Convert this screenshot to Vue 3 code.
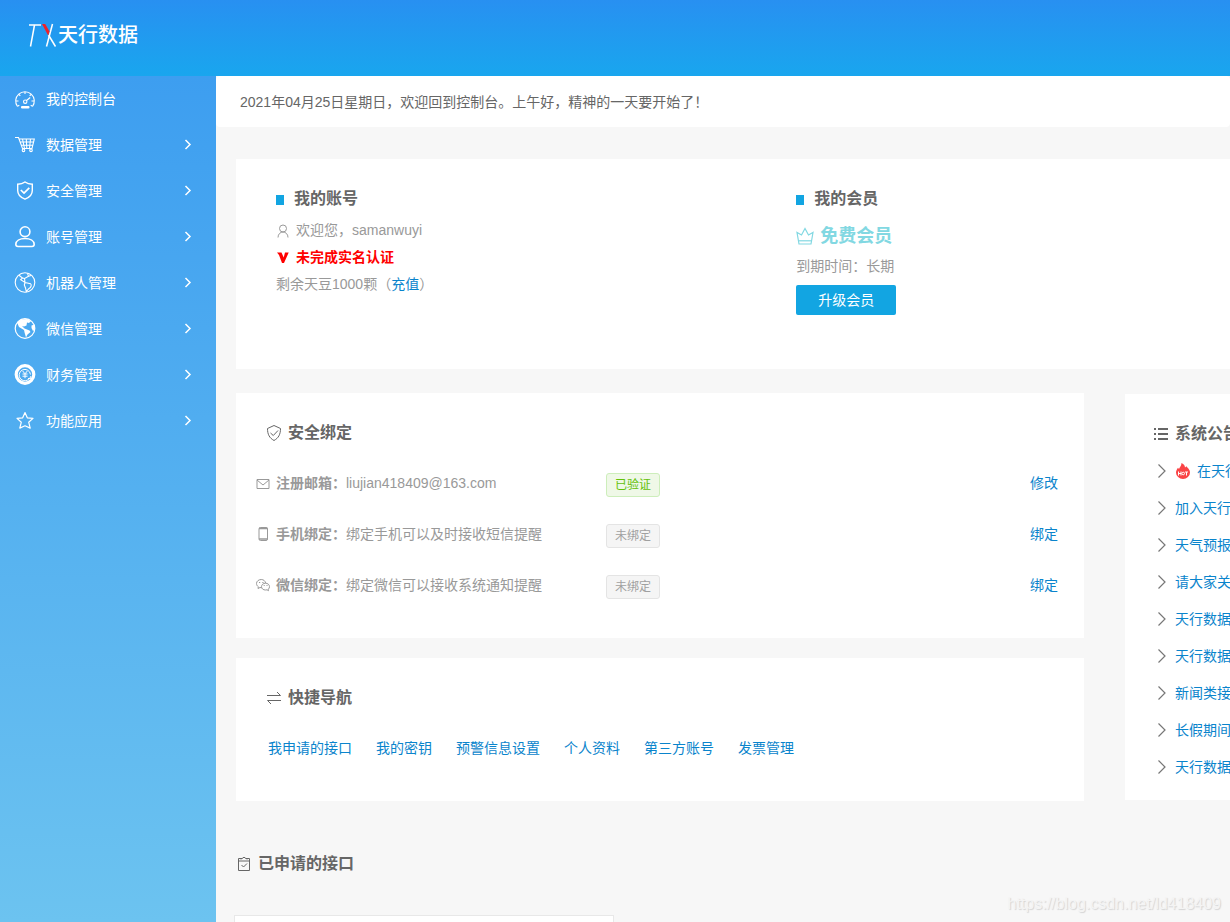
<script setup>
const menu = [
  { label: '我的控制台', icon: 'gauge' },
  { label: '数据管理', icon: 'cart', more: true },
  { label: '安全管理', icon: 'shield', more: true },
  { label: '账号管理', icon: 'user', more: true },
  { label: '机器人管理', icon: 'globe', more: true },
  { label: '微信管理', icon: 'earth', more: true },
  { label: '财务管理', icon: 'coin', more: true },
  { label: '功能应用', icon: 'star', more: true },
]

const bindings = [
  { icon: 'mail', label: '注册邮箱：', text: 'liujian418409@163.com', tag: '已验证', ok: true, action: '修改' },
  { icon: 'phone', label: '手机绑定：', text: '绑定手机可以及时接收短信提醒', tag: '未绑定', ok: false, action: '绑定' },
  { icon: 'wechat', label: '微信绑定：', text: '绑定微信可以接收系统通知提醒', tag: '未绑定', ok: false, action: '绑定' },
]

const shortcuts = ['我申请的接口', '我的密钥', '预警信息设置', '个人资料', '第三方账号', '发票管理']

const notices = [
  { text: '在天行', hot: true },
  { text: '加入天行' },
  { text: '天气预报' },
  { text: '请大家关' },
  { text: '天行数据' },
  { text: '天行数据' },
  { text: '新闻类接' },
  { text: '长假期间' },
  { text: '天行数据' },
]
</script>

<template>
  <div class="page">
    <header class="topbar">
      <a class="brand" href="#">
        <svg class="brand-mark" viewBox="0 0 30 26" aria-hidden="true">
          <g fill="none" stroke="#fff" stroke-width="1.5">
            <path d="M1 3H13" />
            <path d="M6.500 3L2.500 24.500" />
            <path d="M24.500 2L18.500 24.500" />
            <path d="M20.500 13L27.500 24.500" />
          </g>
          <path d="M14 2H17.200L21.500 9.500L20.200 13.500Z" fill="#ee2028" />
        </svg>
        <span>天行数据</span>
      </a>
    </header>

    <div class="body">
      <nav class="sidebar">
        <a v-for="item in menu" :key="item.label" class="menu-item" href="#">
          <svg class="menu-icon" viewBox="0 0 22 22" aria-hidden="true">
            <g v-if="item.icon === 'gauge'" fill="none" stroke="currentColor" stroke-width="1.1">
              <path d="M3.500 18.500A9.300 9.300 0 1 1 18.500 18.500" />
              <path d="M11 4V6M5 6.500L6.300 7.800M17 6.500L15.700 7.800M2 13H4.500M17.500 13H20M3.500 18.300L5.300 17.200M18.500 18.300L16.700 17.200M12.500 12.500L16.200 9.500" />
              <circle cx="11.200" cy="13.700" r="1.700" />
              <rect x="7.500" y="18.500" width="7.500" height="1.500" rx="0.700" fill="currentColor" />
            </g>
            <g v-else-if="item.icon === 'cart'" fill="none" stroke="currentColor" stroke-width="1.100">
              <path d="M1 3.500H4.500L8.500 14.500H18L20.300 5H5.200M6.300 8H19.500M7.400 11.200H18.800M8.500 5L10.500 14.500M12.300 5L12.800 14.500M16.500 5L15.500 14.500" />
              <circle cx="9.500" cy="16.300" r="1.300" />
              <circle cx="17" cy="16.300" r="1.300" />
            </g>
            <g v-else-if="item.icon === 'shield'" fill="none" stroke="currentColor" stroke-width="1.400">
              <path d="M11 2C8.800 3.700 6.300 4.300 3.700 4.300V10.500C3.700 14.700 6.500 17.500 11 19.200C15.500 17.500 18.300 14.700 18.300 10.500V4.300C15.700 4.300 13.200 3.700 11 2Z" />
              <path d="M6.800 10L10 13.100L15.300 7.800" stroke-width="1.700" />
            </g>
            <g v-else-if="item.icon === 'user'" fill="none" stroke="currentColor" stroke-width="1.600">
              <circle cx="11" cy="5.700" r="4.900" />
              <path d="M4 20.500H18C19.300 20.500 20.200 19.600 20.200 18.300C20 15 16.500 12.500 11 12.500S2 15 1.800 18.300C1.800 19.600 2.700 20.500 4 20.500Z" />
            </g>
            <g v-else-if="item.icon === 'globe'" fill="none" stroke="currentColor" stroke-width="1.100">
              <circle cx="11" cy="10.500" r="9.800" />
              <path d="M5 3.300L8.500 6L6.700 7.700L11 10.500L10.500 6.500L14.500 4.300L13.500 1.300M11 10.500L16.500 11.700C18 13 17 15.500 15 16.500L12.300 19.500L11.500 16L10.300 13Z" />
              <path d="M14.500 4.300L17 3.500M8.500 6L10.500 6.500" />
            </g>
            <g v-else-if="item.icon === 'earth'">
              <circle cx="11" cy="10.500" r="9.800" fill="none" stroke="currentColor" stroke-width="1.200" />
              <path d="M3 4.500L7 1.500L13 1L17 3L15 5L13 4.500L12.500 7.500L10 8.500L8 8L10.500 10.500L15.500 12.500L16.500 14L13.500 16.500L12 19.500L10.700 15L10 12L5 9Z" fill="currentColor" />
              <path d="M17.500 7.500L20.500 6.500L20.800 11.500L19 13L17.500 10Z" fill="currentColor" />
            </g>
            <g v-else-if="item.icon === 'coin'" fill="none" stroke="currentColor">
              <circle cx="11" cy="10.500" r="8.800" stroke-width="3.200" />
              <path d="M16 13.500A5.700 5.700 0 1 1 16.500 10.500M14 14.500H16.800V12" stroke-width="1" />
              <path d="M8.500 6.800L11 9.800L13.500 6.800M11 9.800V14.200M8.500 10H13.500M8.500 12.200H13.500" stroke-width="1" />
            </g>
            <path v-else d="M11 2.500L13.300 7.800L19 8.400L14.700 12.200L16.200 18.100L11 15.800L5.800 18.100L7.300 12.200L3 8.400L8.700 7.800Z" fill="none" stroke="currentColor" stroke-width="1.200" stroke-linejoin="round" />
          </svg>
          <span>{{ item.label }}</span>
          <svg v-if="item.more" class="menu-arrow" viewBox="0 0 8 12" aria-hidden="true">
            <path d="M1.500 1L6 5.500L1.500 10" fill="none" stroke="currentColor" stroke-width="1.500" />
          </svg>
        </a>
      </nav>

      <main class="main">
        <p class="greeting">2021年04月25日星期日，欢迎回到控制台。上午好，精神的一天要开始了！</p>

        <section class="panel overview">
          <div>
            <h2 class="overview-title">我的账号</h2>
            <p class="line">
              <svg class="icon" viewBox="0 0 14 14" aria-hidden="true">
                <g fill="none" stroke="currentColor" stroke-width="1">
                  <circle cx="7" cy="4.500" r="3.500" />
                  <path d="M2 13.500C2 10 4.500 8 7 8S12 10 12 13.500" />
                </g>
              </svg>
              <span>欢迎您，samanwuyi</span>
            </p>
            <p class="line warn">
              <svg class="icon" viewBox="0 0 14 14" aria-hidden="true">
                <path d="M1 1.500H5.500L7.700 6.500L9 1.500H12.700L8 12H6L3 4Z" fill="currentColor" />
              </svg>
              <span>未完成实名认证</span>
            </p>
            <p class="line">剩余天豆1000颗（<a href="#">充值</a>）</p>
          </div>
          <div>
            <h2 class="overview-title">我的会员</h2>
            <p class="level">
              <svg class="crown" viewBox="0 0 18 18" aria-hidden="true">
                <g fill="none" stroke="currentColor" stroke-width="1.200">
                  <path d="M3 17L1 5.500L5.500 8L9 1.500L12.500 8L17 5.500L15 17Z" />
                  <path d="M2.800 13.800H15.200" />
                </g>
              </svg>
              <span>免费会员</span>
            </p>
            <p class="expiry">到期时间：长期</p>
            <button class="upgrade" type="button">升级会员</button>
          </div>
        </section>

        <div class="columns">
          <div class="stack">
            <section class="panel security">
              <h2 class="title">
                <svg class="icon" viewBox="0 0 14 16" aria-hidden="true">
                  <g fill="none" stroke="currentColor" stroke-width="1">
                    <path d="M7 0.500L13.500 3.500C13.500 9.500 11.500 13 7 15.500C2.500 13 0.500 9.500 0.500 3.500Z" />
                    <path d="M3.500 8L6.300 10.500L11 5.500" />
                  </g>
                </svg>
                <span>安全绑定</span>
              </h2>
              <div v-for="row in bindings" :key="row.label" class="binding">
                <p class="binding-text">
                  <svg class="icon" viewBox="0 0 14 14" aria-hidden="true">
                    <g v-if="row.icon === 'mail'" fill="none" stroke="currentColor">
                      <path d="M1 3.500H13V12.500H1ZM1 4L7 9L13 4" />
                    </g>
                    <g v-else-if="row.icon === 'phone'" fill="none" stroke="currentColor">
                      <rect x="3" y="0.500" width="8.500" height="13" rx="1.500" />
                      <path d="M3 1.300H11.500M3 12H11.500" stroke-width="1.700" />
                    </g>
                    <g v-else fill="none" stroke="currentColor" stroke-width="1">
                      <path d="M9.700 5.200C9.300 3 7.500 1.500 5.300 1.500C2.700 1.500 0.500 3.200 0.500 5.500C0.500 7 1.300 8 2.300 8.700L2 10.500L4 9.500L5.500 9.700" />
                      <path d="M9.500 5.200C7.300 5.200 5.500 6.700 5.500 8.700S7.300 12 9.500 12L11 11.800L12.500 12.700L12.300 11.200C13.100 10.500 13.500 9.700 13.500 8.700C13.500 6.700 11.700 5.200 9.500 5.200Z" />
                      <path d="M3 4.500H4.200M6.300 4.500H7.500M7.700 7.500H8.700M10.500 7.500H11.500" />
                    </g>
                  </svg>
                  <strong>{{ row.label }}</strong><span>{{ row.text }}</span>
                </p>
                <div class="status"><span class="tag" :class="{ ok: row.ok }">{{ row.tag }}</span></div>
                <a href="#">{{ row.action }}</a>
              </div>
            </section>

            <section class="panel quick">
              <h2 class="title">
                <svg class="icon" viewBox="0 0 14 16" aria-hidden="true">
                  <path d="M0 5.500H13.500L10 2M14 10.500H0.500L4 14" fill="none" stroke="currentColor" />
                </svg>
                <span>快捷导航</span>
              </h2>
              <nav class="shortcuts">
                <a v-for="name in shortcuts" :key="name" href="#">{{ name }}</a>
              </nav>
            </section>
          </div>

          <section class="panel notices">
            <h2 class="title">
              <svg class="icon" viewBox="0 0 14 16" aria-hidden="true">
                <path d="M0 3H2M4 3H14M0 8H2M4 8H14M0 13H2M4 13H14" stroke="currentColor" stroke-width="2" />
              </svg>
              <span>系统公告</span>
            </h2>
            <ul>
              <li v-for="(notice, i) in notices" :key="i">
                <svg class="notice-arrow" viewBox="0 0 8 14" aria-hidden="true">
                  <path d="M0.500 0.500L7 7L0.500 13.500" fill="none" stroke="currentColor" stroke-width="1.200" />
                </svg>
                <svg v-if="notice.hot" class="hot" viewBox="0 0 16 16" role="img" aria-label="HOT">
                  <path d="M6.500 0C9 1 10 3 10 4.500L11.500 3.300C12 4.500 15 6.300 15 9.500A7 6.500 0 0 1 1 9.500C1 7.500 2 6 3 4.700L4 6C4.500 4 6.500 3 6.500 0Z" fill="#fa4446" />
                  <path d="M3.500 8.500V12.500M6 8.500V12.500M3.500 10.500H6M10 9H13M11.500 9V12.500" stroke="#fff" fill="none" />
                  <circle cx="8.200" cy="10.500" r="1.300" stroke="#fff" fill="none" />
                </svg>
                <a href="#">{{ notice.text }}</a>
              </li>
            </ul>
          </section>
        </div>

        <section class="applied">
          <h2 class="title">
            <svg class="icon" viewBox="0 0 14 16" aria-hidden="true">
              <g fill="none" stroke="currentColor">
                <path d="M4 3.500V2.500H5.500L6 1.500H8L8.500 2.500H10V3.500M4 2.500H1.500V14.500H12.500V2.500H10M1.500 5H12.500" />
                <path d="M4.500 9L6.500 11L10 7.500" />
              </g>
            </svg>
            <span>已申请的接口</span>
          </h2>
          <div class="api-card"></div>
        </section>
      </main>
    </div>
    <div class="watermark">https://blog.csdn.net/ld418409</div>
  </div>
</template>

<style>
body {
  margin: 0;
  background: #f7f7f7;
}
</style>

<style scoped>
.page {
  position: relative;
  display: flex;
  flex-direction: column;
  min-height: 100vh;
  overflow: hidden;
  background: #f7f7f7;
  color: #999;
  font: 14px/22px "Liberation Sans", Arial, "Noto Sans CJK SC", sans-serif;
}
h2, p, ul {
  margin: 0;
  padding: 0;
}
a {
  color: #0a84cc;
  text-decoration: none;
}
svg {
  flex: none;
}
.topbar {
  height: 76px;
  background: linear-gradient(#2890f1, #19a6ee);
}
.brand {
  display: inline-flex;
  align-items: center;
  padding: 21px 28px;
  color: #fff;
  font-size: 20px;
  font-weight: 500;
  line-height: 28px;
}
.brand-mark {
  width: 30px;
  height: 26px;
}
.body {
  display: flex;
  flex: 1;
}
.sidebar {
  flex: none;
  width: 216px;
  background: linear-gradient(#3d9ef0, #6cc3f0);
}
.menu-item {
  display: flex;
  align-items: center;
  gap: 10px;
  height: 46px;
  padding: 0 24px 0 14px;
  color: #fff;
}
.menu-icon {
  width: 22px;
  height: 22px;
}
.menu-arrow {
  width: 8px;
  height: 12px;
  margin-left: auto;
}
.main {
  display: flex;
  flex: 1;
  flex-direction: column;
  min-width: 0;
}
.greeting {
  padding: 15px 24px 14px;
  border-radius: 4px;
  background: #fff;
  color: #666;
}
.panel {
  background: #fff;
}
.overview {
  display: grid;
  grid-template-columns: 6fr 5fr;
  margin: 32px 0 24px 20px;
  padding: 26px 0 54px 40px;
}
.overview-title,
.title {
  display: flex;
  align-items: center;
  color: #666;
  font-size: 16px;
  font-weight: 700;
  line-height: 28px;
}
.overview-title {
  gap: 10px;
  margin-bottom: 4px;
}
.overview-title::before {
  width: 8px;
  height: 10px;
  margin-top: 2px;
  background: #12a5e2;
  content: "";
}
.title {
  gap: 7px;
}
.title .icon {
  width: 14px;
  height: 16px;
}
.icon {
  width: 14px;
  height: 14px;
}
.line {
  display: flex;
  align-items: center;
  line-height: 27px;
}
.line .icon {
  margin-right: 6px;
}
.warn {
  color: #f00;
  font-weight: 700;
}
.level {
  display: flex;
  align-items: center;
  gap: 6px;
  color: #82d8e2;
  font-size: 18px;
  font-weight: 700;
  line-height: 38px;
}
.crown {
  width: 18px;
  height: 18px;
}
.upgrade {
  display: block;
  width: 100px;
  height: 30px;
  margin-top: 8px;
  padding: 0;
  border: 0;
  border-radius: 2px;
  background: #12a5e2;
  color: #fff;
  font: inherit;
}
.columns {
  display: grid;
  grid-template-columns: minmax(0, 1fr) 105px;
  gap: 41px;
  align-items: start;
  margin-left: 20px;
}
.stack {
  display: grid;
  gap: 20px;
}
.security {
  padding: 26px 26px 26px 20px;
}
.security .title {
  padding: 0 0 12px 11px;
}
.binding {
  display: grid;
  grid-template-columns: 350px 1fr auto;
  align-items: start;
  height: 38px;
  padding-top: 13px;
}
.binding-text {
  display: flex;
  align-items: center;
  white-space: nowrap;
}
.binding .icon {
  margin-right: 6px;
}
.status {
  padding-top: 1px;
}
.tag {
  display: inline-block;
  padding: 1px 8px 0;
  border: 1px solid #e4e4e4;
  border-radius: 3px;
  background: #f5f5f5;
  color: #a0a0a0;
  font-size: 12px;
  line-height: 21px;
}
.tag.ok {
  border-color: #cdeebb;
  background: #eff8e7;
  color: #63c10a;
}
.quick {
  padding: 26px 31px 42px;
}
.shortcuts {
  display: flex;
  gap: 24px;
  padding: 25px 0 0 1px;
}
.notices {
  margin-top: 1px;
  padding: 26px 0 15px 29px;
  overflow: hidden;
  white-space: nowrap;
}
.notices ul {
  padding: 4px 0 0 4px;
  list-style: none;
}
.notices li {
  display: flex;
  align-items: center;
  height: 37px;
  color: #777;
}
.notice-arrow {
  width: 8px;
  height: 14px;
  margin-right: 9px;
}
.hot {
  width: 16px;
  height: 16px;
  margin-right: 6px;
}
.applied {
  display: flex;
  flex: 1;
  flex-direction: column;
  padding: 49px 0 0 18px;
}
.applied .title {
  padding: 0 0 37px 3px;
}
.api-card {
  flex: 1 0 6px;
  width: 378px;
  border: 1px solid #e8e8e8;
  border-bottom: 0;
  background: #fff;
}
.watermark {
  position: absolute;
  right: 9px;
  bottom: 8px;
  color: #f4f4f4;
  font-size: 16px;
  line-height: 20px;
  text-shadow: 1px 1px 1px #d4d4d4;
}
</style>
